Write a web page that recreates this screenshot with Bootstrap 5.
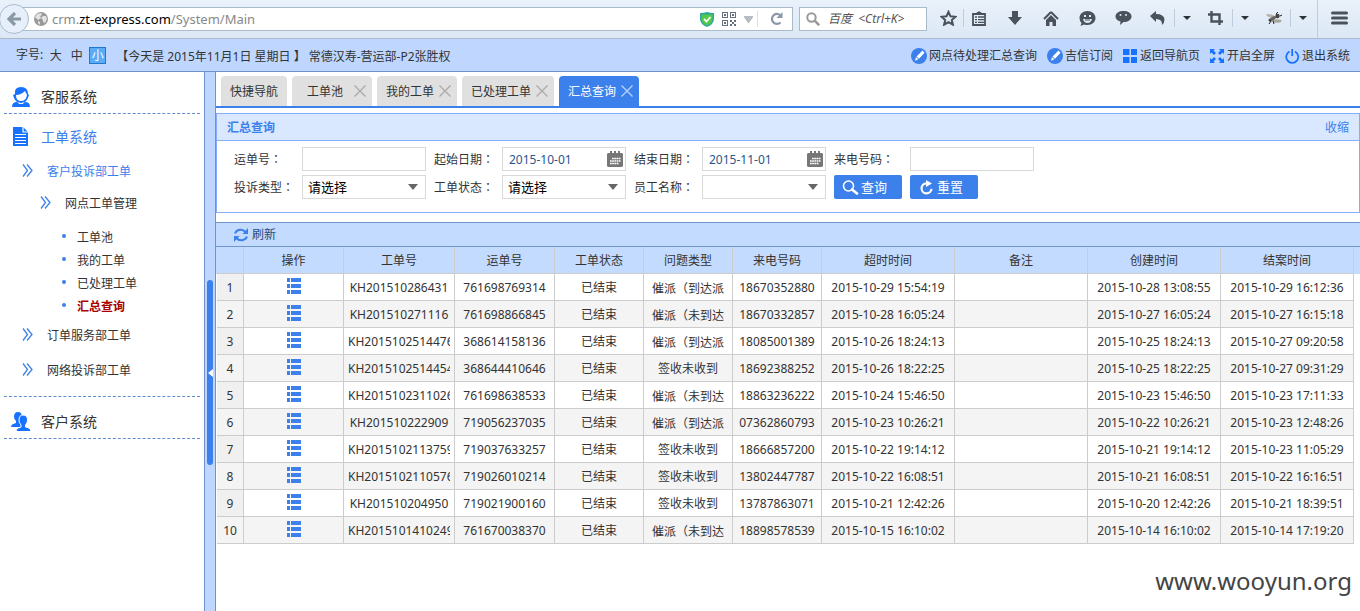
<!DOCTYPE html>
<html lang="zh-CN">
<head>
<meta charset="utf-8">
<meta name="viewport" content="width=device-width, initial-scale=1">
<title>汇总查询</title>
<link href="https://cdn.jsdelivr.net/npm/bootstrap@5.3.0/dist/css/bootstrap.min.css" rel="stylesheet">
<style>
body{font:12px/18px "Noto Sans","Noto Sans CJK SC",sans-serif;color:#333;background:#fff}
a{color:inherit;text-decoration:none}
button{background:none;border:0;padding:0;color:inherit}
svg{display:block;flex:none}
.mid{font-family:"Noto Sans CJK TC",sans-serif}
/* browser bar */
.chrome{height:39px;background:linear-gradient(#e9f1fa,#dce8f6);border-bottom:1px solid #aab8c8;color:#4a525c}
.back{width:30px;height:30px;border-radius:50%;border:1px solid #a9bccd;background:#e6effa;margin-left:-1px;z-index:1}
.addr{height:24px;border:1px solid #a9bac9;background:#fff;margin-left:-10px;padding-left:14px}
.find input{border:0;outline:0;background:none;min-width:0}
.url{font-size:13px;color:#888;white-space:nowrap}
.url b{font-weight:400;color:#000}
.find{width:128px;height:24px;border:1px solid #a9bac9;background:#fff;margin:0 6px;padding-left:6px}
.find input{width:96px;font-style:italic;color:#555}
.find input::placeholder{color:#555}
.tool{width:36px;height:38px;padding-bottom:2px;display:flex;align-items:center;justify-content:center}
.tool-star{width:30px}.tool-clip{width:32px;margin-right:2px}.tool-half{width:33px}.tool-drop{width:25px}
.sep{position:relative}
.sep::before{content:"";position:absolute;left:0;top:9px;bottom:11px;border-left:1px solid #bfccd9}
.tool-menu{width:43px;margin-left:2px;border-left:1px solid #bfccd9}
/* page header */
.topbar{height:33px;background:#bfd7ff;border-bottom:1px solid #6c93cf}
.size-btn{width:17px;height:17px;line-height:15px}
.size-btn.active{background:#5aacf5;border:1px solid #2277cc;color:#fff}
.today{padding:3px 0 0 10px}
.quick{gap:10px;padding:2px 10px 0 0}
.quick a{display:flex;align-items:center;gap:2px;white-space:nowrap}
/* side menu */
.side{width:204px;padding:8px 4px 0}
.side a{display:flex;align-items:center;height:34px}
.side .top-item{font-size:14px;padding-left:6px;gap:9px}
.side .sub-open{margin-top:6px}
.side .lv1{height:35px;padding-left:18px;gap:14px}
.side .lv2{height:30px;padding-left:36px;gap:14px;margin-bottom:7px}
.lv1 svg,.lv2 svg{margin-bottom:3px}
.side .leaf{height:23px;padding-left:58px;gap:11px}
.leaf::before{content:"";width:4px;height:4px;border-radius:50%;background:#3c80ec;margin-bottom:4px}
.on{color:#3c80ec}
.dash{border-bottom:1px dashed #5f8dc9}
.leaf.current{color:#a80000;font-weight:700}
.splitter{width:12px;background:#bfd7ff;border:solid #6c93cf;border-width:0 1px;padding-top:62px}
.handle{width:6px;height:185px;border-radius:3px;background:#3c80ec}
/* tabs */
.tabs{gap:5px;padding:4px 5px 0;border-bottom:2px solid #3c80ec}
.tab-box{height:30px;background:#e0e0e0;border-radius:4px 4px 0 0;padding:0 6px 0 9px;display:flex;align-items:center;gap:5px;color:#333}
.tab-box .label{min-width:48px;text-align:center;padding-top:2px}
.tab-box.only{padding-right:9px}
.tab-box button{color:#aaa}
.tab-box.active{background:#3c80ec;color:#fff}
.tab-box.active button{color:#b9d2fa}
/* query panel */
.panel{border:1px solid #85aefa;margin-top:5px;height:100px}
.panel-top{height:27px;background:#dae8ff;border-bottom:1px solid #85aefa;padding:2px 10px 0;color:#3c80ec}
.query{display:grid;grid-template-columns:60px 124px 60px 124px 60px 124px 68px 124px;column-gap:8px;row-gap:4px;padding:6px 17px;align-items:center}
.query label{white-space:nowrap}
.box{height:24px;width:100%;border:1px solid #d9d9d9;border-radius:0;padding:0 6px;background-color:#fff;color:#2a568f;outline:0}
.query select{appearance:none;color:#000;font-size:13px;padding:0 5px;background:#fff url("data:image/svg+xml,%3Csvg xmlns='http://www.w3.org/2000/svg' width='10' height='6'%3E%3Cpath d='M0 0h10L5 6z' fill='%23666'/%3E%3C/svg%3E") no-repeat right 7px center}
.date{position:relative}
.date svg{position:absolute;right:3px;top:4px}
.act{width:68px;height:24px;background:#3c80ec;color:#fff;border-radius:2px;font-size:13px;display:flex;align-items:center;padding-left:8px}
.act svg{margin-right:2px}
/* data grid */
.grid-tools{height:25px;margin-top:9px;background:#c3dbff;border:solid #6f97cc;border-width:1px 0;padding-left:18px;color:#284a78}
.grid-wrap{background:linear-gradient(#c3dbff 27px,#fff 27px);padding:0 6px 0 1px}
.data{width:100%;table-layout:fixed;border-collapse:separate;border-spacing:0;text-align:center}
.data th,.data td{height:27px;padding:2px 4px 0;border:solid #ccc;border-width:0 1px 1px 0;white-space:nowrap;overflow:hidden;font-weight:400;color:#333}
.data th{background:#c3dbff}
.data td:first-child{background:#f0f0f0}
.data tbody tr:nth-child(even) td{background:#f4f4f4}
.data td div{overflow:hidden}
.data td svg{margin:-4px auto 0}
.c-no{width:27px}.c-a{width:100px}.c-kh{width:111px}.c-b{width:89px}.c-t{width:133px}
.site-mark{font-size:24px;line-height:34px;color:#444;padding:0 8px 13px}
</style>
</head>
<body class="d-flex flex-column vh-100 overflow-hidden">
<svg width="0" height="0" class="position-absolute" aria-hidden="true">
<symbol id="chev" viewBox="0 0 11 13"><path d="M1 .5l4.500 6-4.500 6M5 .5l5 6-5 6" fill="none" stroke="#3c80ec" stroke-width="1.300"/></symbol>
<symbol id="x" viewBox="0 0 12 12"><path d="M.5.5l11 11M11.500.5l-11 11" stroke="currentColor" stroke-width="1.300"/></symbol>
<symbol id="caret" viewBox="0 0 8 4"><path d="M0 0h8L4 4z" fill="#2c333b"/></symbol>
<symbol id="pen" viewBox="0 0 16 16"><circle cx="8" cy="8" r="8" fill="#3c80ec"/><path d="M11.500 2.500l2 2.200-5.500 6-2.500-2.300zM5 9l2.400 2.300L4 12.800z" fill="#fff"/></symbol>
<symbol id="cal" viewBox="0 0 16 16"><path d="M1 2h2V0h2v2h2V0h2v2h2V0h2v2h2l1 1v12l-1 1H1l-1-1V3z" fill="#777"/><path d="M5 7.500h9M3 10h11M3 12.500h9" stroke="#fff" stroke-width="1.700" stroke-dasharray="1.700 .5"/></symbol>
<symbol id="list" viewBox="0 0 14 16"><path d="M0 0h3v4H0zM4 0h10v4H4zM0 6h3v4H0zM4 6h10v4H4zM0 12h3v4H0zM4 12h10v4H4z" fill="#3c80ec"/></symbol>
</svg>

<div class="chrome d-flex align-items-center flex-shrink-0">
  <button class="back d-flex align-items-center justify-content-center position-relative" aria-label="后退"><svg width="15" height="14" viewBox="0 0 15 14"><path d="M8 1L2 7l6 6M2 7h12" fill="none" stroke="#8b99a6" stroke-width="3.200"/></svg></button>
  <div class="addr flex-grow-1 d-flex align-items-center">
    <svg width="14" height="14" viewBox="0 0 14 14"><circle cx="7" cy="7" r="7" fill="#999"/><path d="M3 2l4-1 1 2-2 1 1 2-3 2-2-2-1-1zM9 4l3 0 1 3-2 4-2-1 0-2-2-2zM4 9l2 1 0 3-2-2z" fill="#e3e3e3"/></svg>
    <span class="url ms-1 flex-grow-1">crm.<b>zt-express.com</b>/System/Main</span>
    <svg width="14" height="15" viewBox="0 0 14 15"><path d="M0 1q4 0 7-1 3 1 7 1v6q0 5-7 8-7-3-7-8z" fill="#2fa7a0"/><path d="M1.500 2.500h11V7q0 4-5.500 6.500Q1.500 11 1.500 7z" fill="#53c948"/><path d="M4 7l2.500 2.500L10.500 5" fill="none" stroke="#fff" stroke-width="1.800"/></svg>
    <svg class="ms-2" width="14" height="14" viewBox="0 0 14 14" fill="#667180"><path d="M0 0h6v6H0zM8 0h6v6H8zM0 8h6v6H0zM8 8h2v2H8zM12 8h2v2h-2zM10 10h2v2h-2zM8 12h2v2H8zM12 12h2v2h-2z"/><path d="M1 1h4v4H1zM9 1h4v4H9zM1 9h4v4H1z" fill="#fff"/><path d="M2 2h2v2H2zM10 2h2v2h-2zM2 10h2v2H2z"/></svg>
    <svg class="ms-2" width="9" height="7" viewBox="0 0 9 7"><path d="M0 .5h9L4.500 7z" fill="#b6bcc3" stroke="#939ba5" stroke-width=".5"/></svg>
    <span class="border-start ms-1 me-1 py-2"></span>
    <svg class="ms-2 me-2" width="14" height="14" viewBox="0 0 14 14"><path d="M10.500 10.500A5 5 0 1 1 11 4" fill="none" stroke="#8b98a8" stroke-width="2.200"/><path d="M12.500 0v6H6.500z" fill="#8b98a8"/></svg>
  </div>
  <div class="find d-flex align-items-center gap-2">
    <svg width="14" height="14" viewBox="0 0 14 14" fill="none" stroke="#999"><circle cx="5.500" cy="5.500" r="4.200" stroke-width="2"/><path d="M8.700 8.700l4.500 4.500" stroke-width="2.600"/></svg>
    <input type="text" aria-label="搜索" placeholder="百度  &lt;Ctrl+K&gt;" class="p-0">
  </div>
  <button class="tool tool-star" aria-label="收藏"><svg width="17" height="16" viewBox="0 0 17 16"><path d="M8.500 1.800l2 4.500 5 .5-3.700 3.200 1.100 4.700-4.400-2.500-4.400 2.500L5.200 10 1.500 6.800l5-.5z" fill="none" stroke="#4a525c" stroke-width="2"/></svg></button>
  <button class="tool tool-clip sep" aria-label="书签"><svg width="14" height="15" viewBox="0 0 14 15"><path d="M1 3h12v11H1z" fill="none" stroke="#4a525c" stroke-width="1.800"/><path d="M4 3l1-2h1l1-1 1 1h1l1 2z" fill="#4a525c"/><path d="M3 6h2M6 6h6M3 8.700h2M6 8.700h6M3 11.400h2M6 11.400h6" stroke="#4a525c" stroke-width="1.300"/></svg></button>
  <button class="tool" aria-label="下载"><svg width="14" height="14" viewBox="0 0 14 14"><path d="M4 0h6v6h4l-7 8-7-8h4z" fill="#4a525c"/></svg></button>
  <button class="tool" aria-label="主页"><svg width="16" height="15" viewBox="0 0 16 15"><path d="M8 1L1 8M8 1l7 7" stroke="#4a525c" stroke-width="2"/><path d="M8 4l5 5v6H9.500v-4h-3v4H3V9z" fill="#4a525c"/></svg></button>
  <button class="tool" aria-label="表情"><svg width="17" height="15" viewBox="0 0 17 15"><path d="M8.500 0C13 0 16.500 3 16.500 7s-3.500 7-8 7q-2 0-3.500-.6L1.500 15l1-3Q.5 10 .5 7C.5 3 4 0 8.500 0z" fill="#4a525c"/><path d="M5 4h2v2H5zM10 4h2v2h-2zM4 8h9q-1 4-4.500 4T4 8z" fill="#dfe9f5"/><path d="M6 9h5" stroke="#4a525c"/></svg></button>
  <button class="tool" aria-label="聊天"><svg width="17" height="14" viewBox="0 0 17 14"><path d="M8.500 0C13 0 16.500 2 16.500 5.500S13 11 8.500 11L5 14l.5-3.500Q.5 9 .5 5.500C.5 2 4 0 8.500 0z" fill="#4a525c"/><circle cx="5.500" cy="4" r="1" fill="#dfe9f5"/><circle cx="11" cy="4" r="1" fill="#dfe9f5"/></svg></button>
  <button class="tool tool-half" aria-label="撤销"><svg width="15" height="14" viewBox="0 0 15 14"><path d="M0 5l6-5v3q8 0 8.500 5.500Q14.500 12 12 14q.5-6-6-6v3z" fill="#4a525c"/></svg></button>
  <button class="tool tool-drop sep" aria-label="更多撤销"><svg width="8" height="4"><use href="#caret"/></svg></button>
  <button class="tool tool-half" aria-label="截图"><svg width="15" height="14" viewBox="0 0 15 14"><path d="M3.500 0v10.500H12M0 3.500h11.500V14M9 10.500h6" fill="none" stroke="#4a525c" stroke-width="2.400"/></svg></button>
  <button class="tool tool-drop sep" aria-label="更多截图"><svg width="8" height="4"><use href="#caret"/></svg></button>
  <button class="tool tool-half" aria-label="调试"><svg width="16" height="13" viewBox="0 0 16 13"><ellipse cx="4.500" cy="4" rx="4.500" ry="1.500" fill="#b5b3ab" transform="rotate(15 5 5)"/><ellipse cx="11" cy="9" rx="4.500" ry="1.800" fill="#aaa89e"/><path d="M2 8q3-3 6-4l3 1q-3 4-7 5z" fill="#666"/><circle cx="11.500" cy="4" r="2.200" fill="#444"/><path d="M3 8l2 1-2 3M10 2l2-2M14 4l2-1M7 9l1 3" fill="none" stroke="#222"/></svg></button>
  <button class="tool tool-drop sep" aria-label="更多调试"><svg width="8" height="4"><use href="#caret"/></svg></button>
  <button class="tool tool-menu" aria-label="菜单"><svg width="17" height="14" viewBox="0 0 17 14"><path d="M1.500 2h14M1.500 7h14M1.500 12h14" stroke="#4a525c" stroke-width="3" stroke-linecap="round"/></svg></button>
</div>

<header class="topbar d-flex align-items-center justify-content-between flex-shrink-0">
  <div class="d-flex align-items-center">
    <span class="ps-3 me-1">字号:</span>
    <button class="size-btn me-1">大</button><button class="size-btn me-1">中</button><button class="size-btn active">小</button>
    <span class="today">【今天是 2015年11月1日 星期日 】 常德汉寿-营运部-P2张胜权</span>
  </div>
  <nav class="quick d-flex">
    <a href="#"><svg width="16" height="16"><use href="#pen"/></svg>网点待处理汇总查询</a>
    <a href="#"><svg width="16" height="16"><use href="#pen"/></svg>吉信订阅</a>
    <a href="#"><svg width="15" height="14" viewBox="0 0 15 14"><path d="M0 0h6.500v6H0zM8 0h6v6H8zM0 8h6.500v6H0zM8 8h6v6H8z" fill="#1772ff"/></svg>返回导航页</a>
    <a href="#"><svg width="15" height="14" viewBox="0 0 15 14"><path d="M0 0h5L3.500 1.500 6 4 4 6 1.500 3.500 0 5zM14 0v5l-1.500-1.500L10 6 8 4l2.500-2.500L9 0zM0 14V9l1.500 1.500L4 8l2 2-2.500 2.500L5 14zM14 14H9l1.500-1.500L8 10l2-2 2.500 2.500L14 9z" fill="#1772ff"/></svg>开启全屏</a>
    <a href="#"><svg width="15" height="15" viewBox="0 0 15 15"><path d="M4.500 2.500a6 6 0 1 0 5.500 0M7.200 0v7" fill="none" stroke="#1772ff" stroke-width="1.800"/></svg>退出系统</a>
  </nav>
</header>

<div class="d-flex flex-grow-1 overflow-hidden">
  <nav class="side flex-shrink-0">
    <a href="#" class="top-item dash"><svg width="22" height="22" viewBox="0 0 22 22"><path d="M5 8Q4 1 11 1t7 7l1 1-1 3q-2 5-7 5t-7-5L3 9z" fill="#1772ff"/><path d="M6 9q5 0 9-4 1 2 2 4-1 6-6 6T6 9z" fill="#fff"/><path d="M2 21q0-5 5-5 4 3 8 0 5 0 5 5z" fill="#1772ff"/><path d="M8 16q3 2 6 0l-1 2H9z" fill="#fff"/></svg>客服系统</a>
    <a href="#" class="top-item on sub-open"><svg width="22" height="20" viewBox="0 0 22 20"><path d="M3 0h10l5 5v14H3z" fill="#1772ff"/><path d="M13 0v5h5M5 7.500h11M5 10.500h11M5 13.500h11M5 16.500h11" fill="none" stroke="#fff" stroke-width="1.200"/></svg>工单系统</a>
    <a href="#" class="lv1 on"><svg width="11" height="13"><use href="#chev"/></svg>客户投诉部工单</a>
    <a href="#" class="lv2"><svg width="11" height="13"><use href="#chev"/></svg>网点工单管理</a>
    <a href="#" class="leaf">工单池</a>
    <a href="#" class="leaf">我的工单</a>
    <a href="#" class="leaf">已处理工单</a>
    <a href="#" class="leaf current">汇总查询</a>
    <a href="#" class="lv1"><svg width="11" height="13"><use href="#chev"/></svg>订单服务部工单</a>
    <a href="#" class="lv1"><svg width="11" height="13"><use href="#chev"/></svg>网络投诉部工单</a>
    <div class="dash pt-2"></div>
    <a href="#" class="top-item dash mt-2"><svg width="22" height="20" viewBox="0 0 22 20"><path d="M8 0q4 0 4 5 0 3-2 5v2l3 3H1q0-3 5-4V9Q4 7 4 5q0-5 4-5z" fill="#1772ff"/><path d="M13 3q4.500 0 4.500 5 0 3-2 5v2q5.500 1 5.500 4.500H6q0-3.500 5-4.500v-2Q9 11 9 8q0-5 4-5z" fill="#1772ff" stroke="#fff"/></svg>客户系统</a>
  </nav>
  <div class="splitter d-flex align-items-center justify-content-center flex-shrink-0">
    <button class="handle d-flex align-items-center justify-content-center" aria-label="收起菜单"><svg width="5" height="8" viewBox="0 0 5 8"><path d="M5 0v8L0 4z" fill="#fff"/></svg></button>
  </div>

  <main class="flex-grow-1 d-flex flex-column overflow-hidden">
    <div class="tabs d-flex">
      <div class="tab-box only"><a href="#" class="label">快捷导航</a></div>
      <div class="tab-box"><a href="#" class="label">工单池</a><button aria-label="关闭"><svg width="12" height="12"><use href="#x"/></svg></button></div>
      <div class="tab-box"><a href="#" class="label">我的工单</a><button aria-label="关闭"><svg width="12" height="12"><use href="#x"/></svg></button></div>
      <div class="tab-box"><a href="#" class="label">已处理工单</a><button aria-label="关闭"><svg width="12" height="12"><use href="#x"/></svg></button></div>
      <div class="tab-box active"><a href="#" class="label">汇总查询</a><button aria-label="关闭"><svg width="12" height="12"><use href="#x"/></svg></button></div>
    </div>

    <section class="panel flex-shrink-0">
      <div class="panel-top d-flex align-items-center justify-content-between"><b>汇总查询</b><a href="#">收缩</a></div>
      <form class="query">
        <label for="f1">运单号<span class="mid" lang="zh-TW">：</span></label><input id="f1" class="box" type="text">
        <label for="f2">起始日期<span class="mid" lang="zh-TW">：</span></label><div class="date"><input id="f2" class="box" type="text" value="2015-10-01"><svg width="16" height="16"><use href="#cal"/></svg></div>
        <label for="f3">结束日期<span class="mid" lang="zh-TW">：</span></label><div class="date"><input id="f3" class="box" type="text" value="2015-11-01"><svg width="16" height="16"><use href="#cal"/></svg></div>
        <label for="f4">来电号码<span class="mid" lang="zh-TW">：</span></label><input id="f4" class="box" type="text">
        <label for="f5">投诉类型<span class="mid" lang="zh-TW">：</span></label><select id="f5" class="box"><option>请选择</option></select>
        <label for="f6">工单状态<span class="mid" lang="zh-TW">：</span></label><select id="f6" class="box"><option>请选择</option></select>
        <label for="f7">员工名称<span class="mid" lang="zh-TW">：</span></label><select id="f7" class="box"><option></option></select>
        <button type="button" class="act"><svg width="17" height="15" viewBox="0 0 17 15" fill="none" stroke="#fff"><circle cx="6.500" cy="6" r="5" stroke-width="1.600"/><path d="M10 9.500l5 4" stroke-width="2.600" stroke-linecap="round"/></svg>查询</button>
        <button type="reset" class="act"><svg width="17" height="15" viewBox="-2 0 17 15"><path d="M6.500 3.300a5 5 0 1 0 5 5.500" fill="none" stroke="#fff" stroke-width="2.200"/><path d="M6 0l6 3.500L6 7z" fill="#fff"/></svg>重置</button>
      </form>
    </section>

    <div class="grid-tools d-flex align-items-center flex-shrink-0">
      <button class="d-flex align-items-center gap-1"><svg width="14" height="14" viewBox="0 0 14 14"><path d="M1 5.500A6 5.500 0 0 1 11.500 4M13 8.500A6 5.500 0 0 1 2.500 10" fill="none" stroke="#3c80ec" stroke-width="2"/><path d="M14 0v6H8.500zM0 14V8h5.500z" fill="#3c80ec"/></svg>刷新</button>
    </div>
    <div class="grid-wrap">
      <table class="data">
        <colgroup><col class="c-no"><col class="c-a"><col class="c-kh"><col class="c-a"><col class="c-b"><col class="c-b"><col class="c-b"><col class="c-t"><col class="c-t"><col class="c-t"><col class="c-t"></colgroup>
        <thead><tr><th></th><th>操作</th><th>工单号</th><th>运单号</th><th>工单状态</th><th>问题类型</th><th>来电号码</th><th>超时时间</th><th>备注</th><th>创建时间</th><th>结案时间</th></tr></thead>
        <tbody id="rows"></tbody>
      </table>
    </div>
    <div class="site-mark mt-auto text-end">www.wooyun.org</div>
  </main>
</div>
<script>
const records = [
 ['KH201510286431','761698769314','催派（到达派','18670352880','2015-10-29 15:54:19','2015-10-28 13:08:55','2015-10-29 16:12:36'],
 ['KH201510271116','761698866845','催派（未到达','18670332857','2015-10-28 16:05:24','2015-10-27 16:05:24','2015-10-27 16:15:18'],
 ['KH2015102514476','368614158136','催派（到达派','18085001389','2015-10-26 18:24:13','2015-10-25 18:24:13','2015-10-27 09:20:58'],
 ['KH2015102514454','368644410646','签收未收到','18692388252','2015-10-26 18:22:25','2015-10-25 18:22:25','2015-10-27 09:31:29'],
 ['KH2015102311026','761698638533','催派（未到达','18863236222','2015-10-24 15:46:50','2015-10-23 15:46:50','2015-10-23 17:11:33'],
 ['KH201510222909','719056237035','催派（到达派','07362860793','2015-10-23 10:26:21','2015-10-22 10:26:21','2015-10-23 12:48:26'],
 ['KH2015102113759','719037633257','签收未收到','18666857200','2015-10-22 19:14:12','2015-10-21 19:14:12','2015-10-23 11:05:29'],
 ['KH2015102110576','719026010214','签收未收到','13802447787','2015-10-22 16:08:51','2015-10-21 16:08:51','2015-10-22 16:16:51'],
 ['KH201510204950','719021900160','签收未收到','13787863071','2015-10-21 12:42:26','2015-10-20 12:42:26','2015-10-21 18:39:51'],
 ['KH2015101410249','761670038370','催派（未到达','18898578539','2015-10-15 16:10:02','2015-10-14 16:10:02','2015-10-14 17:19:20']
];
const bracket = s => s.replace('（', '<span class="mid" lang="zh-TW">（</span>');
document.getElementById('rows').innerHTML = records.map((r, i) =>
 `<tr><td>${i + 1}</td><td><svg width="14" height="16"><use href="#list"/></svg></td><td><div>${r[0]}</div></td><td>${r[1]}</td><td>已结束</td><td>${bracket(r[2])}</td><td>${r[3]}</td><td>${r[4]}</td><td></td><td>${r[5]}</td><td>${r[6]}</td></tr>`).join('');
</script>
<script src="https://cdn.jsdelivr.net/npm/bootstrap@5.3.0/dist/js/bootstrap.bundle.min.js"></script>
</body>
</html>
